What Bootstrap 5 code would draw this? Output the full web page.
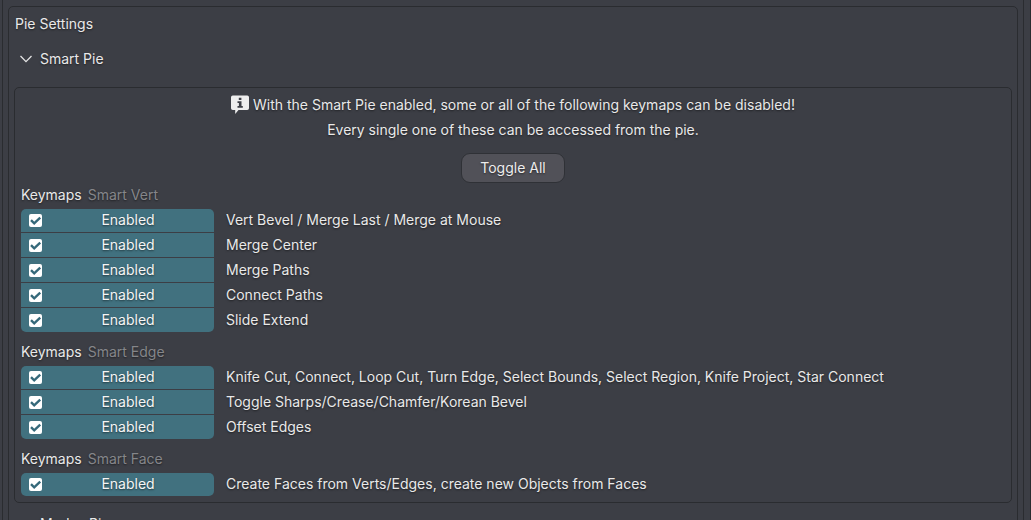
<!DOCTYPE html>
<html lang="en">
<head>
<meta charset="utf-8">
<meta name="viewport" content="width=device-width, initial-scale=1">
<title>Pie Settings</title>
<link href="https://cdn.jsdelivr.net/npm/bootstrap@5.3.0/dist/css/bootstrap.min.css" rel="stylesheet">
<style>
  :root { --line: #2a2c30; --panel: #3c3e45; --accent: #41717f; }
  body {
    height: 100vh;
    background: var(--panel);
    color: #e9e9e9;
    font-family: Inter, "Liberation Sans", sans-serif;
    font-size: 14px;
    line-height: 25px;
    text-shadow: 0 1px 2px rgba(0, 0, 0, .5);
  }
  .window-edge { border-right: 1px solid var(--line); padding: 0 6px 0 2px; }
  .region { border: solid var(--line); border-width: 0 1px; padding: 6px 5px 0; }
  .pie-panel { border: 1px solid var(--line); border-radius: 5px; padding: 4px 5px 0; }
  .pie-box { border: 1px solid var(--line); border-radius: 5px; padding: 4px 6px 6px; }
  .panel-title { padding-left: 1px; }
  .fold { color: inherit; font: inherit; text-shadow: inherit; gap: 8px; padding: 0 6px; }
  .fold-first { margin: 10px 0 16px; }
  .fold-next { margin-top: 8px; }
  .btn-pie {
    --bs-btn-color: #ededed;
    --bs-btn-bg: #515158;
    --bs-btn-border-color: #2f3136;
    --bs-btn-hover-color: #fff;
    --bs-btn-hover-bg: #606068;
    --bs-btn-border-radius: 9px;
    --bs-btn-padding-x: 18px;
    --bs-btn-padding-y: 2px;
    --bs-btn-font-size: 14px;
    --bs-btn-line-height: 24px;
    margin-top: 11px;
    min-width: 104px;
    text-shadow: inherit;
  }
  .keymaps { margin-bottom: 8px; }
  .keymaps h2 { font-size: 14px; line-height: 23px; font-weight: 400; gap: 6px; margin: 0 0 3px; }
  .muted { color: #85868a; }
  .keymap { gap: 12px; height: 24px; margin-bottom: 1px; }
  .keymap:first-child { height: 23px; }
  .keymap:last-child { margin-bottom: 0; }
  .keymap span { padding-bottom: 2px; }
  .toggle {
    width: 193px;
    flex: none;
    padding-left: 8px;
    background: var(--accent);
    color: #f5f5f5;
  }
  .keymap:first-child .toggle { border-radius: 5px 5px 0 0; }
  .keymap:last-child .toggle { border-radius: 0 0 5px 5px; }
  .keymap:only-child .toggle { border-radius: 5px; }
  .toggle .form-check-input { width: 13px; height: 13px; margin: 0; border: 0; border-radius: 2px; background-color: #fff; }
  .toggle .form-check-input:checked {
    background-color: #fff;
    background-image: url("data:image/svg+xml,%3Csvg xmlns='http://www.w3.org/2000/svg' viewBox='0 0 13 13'%3E%3Cpath d='M2 6.200 5.200 9.300 11.200 3.600' fill='none' stroke='%2335697a' stroke-width='2.400'/%3E%3C/svg%3E");
  }
</style>
<script src="https://cdn.jsdelivr.net/npm/bootstrap@5.3.0/dist/js/bootstrap.bundle.min.js" defer></script>
</head>
<body class="overflow-hidden">
<div class="window-edge">
<main class="region">
  <section class="pie-panel">
    <div class="panel-title">Pie Settings</div>
    <button type="button" class="fold fold-first btn border-0 d-flex align-items-center" aria-expanded="true">
      <svg width="12" height="8" viewBox="0 0 12 8" aria-hidden="true"><path d="M.5 1 6 6.6 11.5 1" fill="none" stroke="#e4e4e4" stroke-width="1.3"/></svg>
      <span>Smart Pie</span>
    </button>
    <div class="pie-box">
      <div class="d-flex flex-column align-items-center">
        <div class="d-flex align-items-center gap-1">
          <svg width="18" height="19" viewBox="0 0 18 19" aria-hidden="true"><path d="M1.800 .5h14.400a1.800 1.800 0 0 1 1.800 1.800V13.200a1.800 1.800 0 0 1-1.800 1.800H7.500L4.200 19V15H1.800A1.800 1.800 0 0 1 0 13.200V2.300A1.800 1.800 0 0 1 1.800 .5Z" fill="#eee"/><path d="M7.800 2.800h2.600v2.200H7.800ZM6.500 6.300h4v4.800h1.300v1.700H6.500v-1.700h1.400V8H6.500Z" fill="#3c3e45"/></svg>
          <span>With the Smart Pie enabled, some or all of the following keymaps can be disabled!</span>
        </div>
        <div>Every single one of these can be accessed from the pie.</div>
        <button type="button" class="btn btn-pie">Toggle All</button>
      </div>

      <section class="keymaps">
        <h2 class="d-flex"><span>Keymaps</span><span class="muted">Smart Vert</span></h2>
        <div>
          <div class="keymap d-flex align-items-center"><label class="toggle h-100 d-flex align-items-center"><input class="form-check-input" type="checkbox" checked><span class="flex-grow-1 text-center">Enabled</span></label><span>Vert Bevel / Merge Last / Merge at Mouse</span></div>
          <div class="keymap d-flex align-items-center"><label class="toggle h-100 d-flex align-items-center"><input class="form-check-input" type="checkbox" checked><span class="flex-grow-1 text-center">Enabled</span></label><span>Merge Center</span></div>
          <div class="keymap d-flex align-items-center"><label class="toggle h-100 d-flex align-items-center"><input class="form-check-input" type="checkbox" checked><span class="flex-grow-1 text-center">Enabled</span></label><span>Merge Paths</span></div>
          <div class="keymap d-flex align-items-center"><label class="toggle h-100 d-flex align-items-center"><input class="form-check-input" type="checkbox" checked><span class="flex-grow-1 text-center">Enabled</span></label><span>Connect Paths</span></div>
          <div class="keymap d-flex align-items-center"><label class="toggle h-100 d-flex align-items-center"><input class="form-check-input" type="checkbox" checked><span class="flex-grow-1 text-center">Enabled</span></label><span>Slide Extend</span></div>
        </div>
      </section>

      <section class="keymaps">
        <h2 class="d-flex"><span>Keymaps</span><span class="muted">Smart Edge</span></h2>
        <div>
          <div class="keymap d-flex align-items-center"><label class="toggle h-100 d-flex align-items-center"><input class="form-check-input" type="checkbox" checked><span class="flex-grow-1 text-center">Enabled</span></label><span>Knife Cut, Connect, Loop Cut, Turn Edge, Select Bounds, Select Region, Knife Project, Star Connect</span></div>
          <div class="keymap d-flex align-items-center"><label class="toggle h-100 d-flex align-items-center"><input class="form-check-input" type="checkbox" checked><span class="flex-grow-1 text-center">Enabled</span></label><span>Toggle Sharps/Crease/Chamfer/Korean Bevel</span></div>
          <div class="keymap d-flex align-items-center"><label class="toggle h-100 d-flex align-items-center"><input class="form-check-input" type="checkbox" checked><span class="flex-grow-1 text-center">Enabled</span></label><span>Offset Edges</span></div>
        </div>
      </section>

      <section class="keymaps mb-0">
        <h2 class="d-flex"><span>Keymaps</span><span class="muted">Smart Face</span></h2>
        <div>
          <div class="keymap d-flex align-items-center"><label class="toggle h-100 d-flex align-items-center"><input class="form-check-input" type="checkbox" checked><span class="flex-grow-1 text-center">Enabled</span></label><span>Create Faces from Verts/Edges, create new Objects from Faces</span></div>
        </div>
      </section>
    </div>
    <button type="button" class="fold fold-next btn border-0 d-flex align-items-center" aria-expanded="true">
      <svg width="12" height="8" viewBox="0 0 12 8" aria-hidden="true"><path d="M.5 1 6 6.6 11.5 1" fill="none" stroke="#e4e4e4" stroke-width="1.3"/></svg>
      <span>Modes Pie</span>
    </button>
  </section>
</main>
</div>
</body>
</html>
